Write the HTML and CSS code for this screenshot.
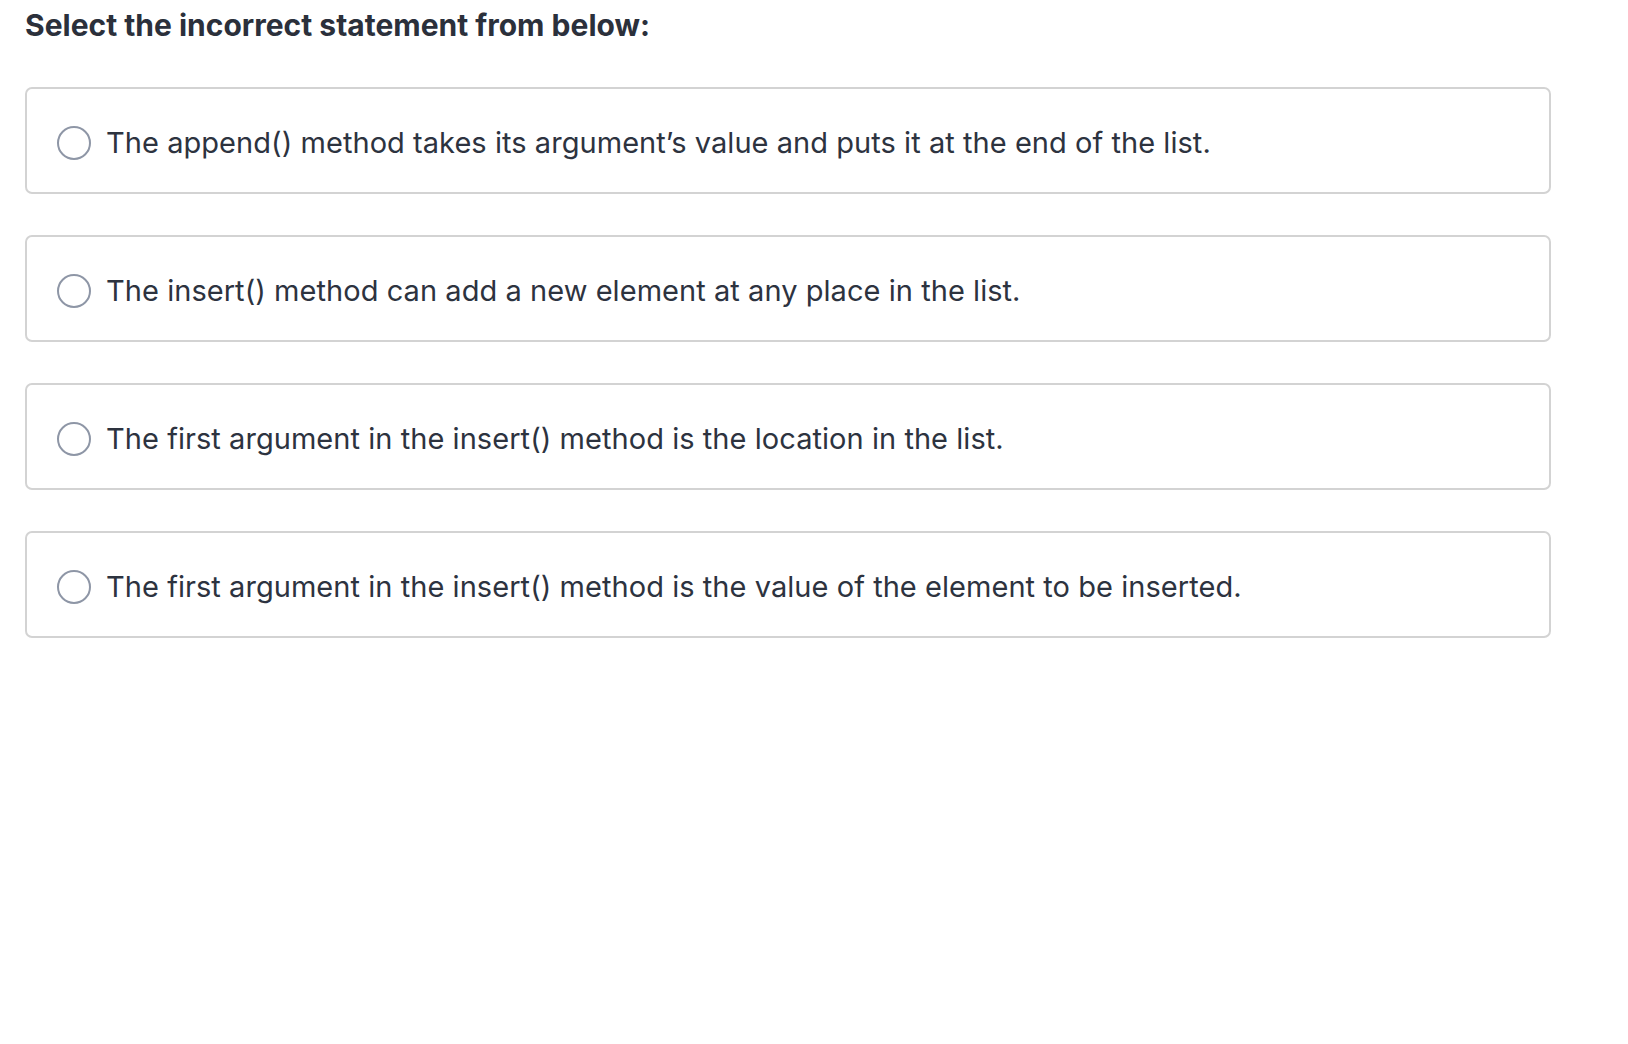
FILE: index.html
```html
<!DOCTYPE html>
<html>
<head>
<meta charset="utf-8">
<link rel="stylesheet" href="styles.css">
</head>
<body>
<div class="quiz">
  <h1 class="question">Select the incorrect statement from below:</h1>
  <div class="options">
    <label class="option"><span class="radio"></span><span class="text">The append() method takes its argument’s value and puts it at the end of the list.</span></label>
    <label class="option"><span class="radio"></span><span class="text">The insert() method can add a new element at any place in the list.</span></label>
    <label class="option"><span class="radio"></span><span class="text">The first argument in the insert() method is the location in the list.</span></label>
    <label class="option"><span class="radio"></span><span class="text">The first argument in the insert() method is the value of the element to be inserted.</span></label>
  </div>
</div>
</body>
</html>
```
FILE: styles.css
```css
html, body {
  margin: 0;
  padding: 0;
  background: #ffffff;
}
body {
  font-family: Inter, "Noto Sans", sans-serif;
  color: #2d333f;
}
.quiz {
  padding: 6px 77px 0 25px;
}
.question {
  margin: 0;
  font-size: 30px;
  font-weight: 700;
  line-height: 38px;
  color: #2b303b;
}
.options {
  margin-top: 43px;
  display: flex;
  flex-direction: column;
  gap: 41px;
}
.option {
  display: flex;
  align-items: center;
  height: 107px;
  box-sizing: border-box;
  border: 2px solid #d3d3d3;
  border-radius: 7px;
  padding: 4px 0 0 30px;
}
.radio {
  width: 30px;
  height: 30px;
  border: 2px solid #8e96a6;
  border-radius: 50%;
  flex: none;
  margin-right: 15px;
}
.text {
  font-size: 29px;
  line-height: 36px;
  letter-spacing: 0.05px;
  color: #2d333f;
}
```
